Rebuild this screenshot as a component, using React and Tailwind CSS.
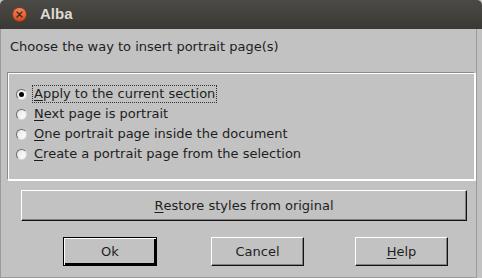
import React from "react";

const OPTIONS = [
  { key: "A", rest: "pply to the current section", checked: true },
  { key: "N", rest: "ext page is portrait" },
  { key: "O", rest: "ne portrait page inside the document" },
  { key: "C", rest: "reate a portrait page from the selection" },
];

function Radio({ checked }) {
  return (
    <div className="relative w-[11px] h-[11px] rounded-full border border-t-[#6e6e6e] border-l-[#6e6e6e] border-b-[#d8d8d8] border-r-[#d8d8d8] bg-gradient-to-br from-[#e6e6e6] to-white flex items-center justify-center shrink-0">
      {checked && <div className="w-[5px] h-[5px] rounded-full bg-black" />}
    </div>
  );
}

function Btn({ children, w, isDefault }) {
  return (
    <div
      className={`${w} h-[29px] flex items-center justify-center text-[13px] text-[#1e1e1e] ${
        isDefault
          ? "border border-black shadow-[inset_1px_1px_0_#fff,inset_-2px_-2px_0_#000]"
          : "border border-t-white border-l-white border-b-[#111] border-r-[#111] shadow-[inset_-1px_-1px_0_#808080]"
      }`}
    >
      {children}
    </div>
  );
}

export default function App() {
  return (
    <div className="w-[482px] h-[278px] bg-[#c2c2c2] flex flex-col overflow-hidden" style={{ fontFamily: '"DejaVu Sans", sans-serif' }}>
      {/* title bar */}
      <div className="h-[29px] shrink-0 rounded-t-[5px] bg-gradient-to-b from-[#4b4a45] to-[#3a3935] flex items-center pl-[12px]">
        <div className="w-[15px] h-[15px] rounded-full bg-gradient-to-b from-[#f5855a] to-[#d9471a] border border-[#8a3a1a] flex items-center justify-center">
          <svg width="7" height="7" viewBox="0 0 7 7">
            <path d="M1 1L6 6M6 1L1 6" stroke="#3a2a20" strokeWidth="1.3" strokeLinecap="round" />
          </svg>
        </div>
        <span className="ml-[13px] text-[15px] font-bold text-[#dfdbd2]" style={{ fontFamily: '"Liberation Sans", sans-serif' }}>
          Alba
        </span>
      </div>

      {/* body */}
      <div className="flex-1 flex flex-col border-l border-r border-b border-[#9a9a9a] mr-[5px]">
        <div className="pl-[9px] pt-[10px] text-[13px] leading-[16px] text-[#1e1e1e]">
          Choose the way to insert portrait page(s)
        </div>

        <div className="ml-[6px] mr-[1px] mt-[17px] h-[108px] border border-t-[#8a8a8a] border-l-[#8a8a8a] border-b-white border-r-white shadow-[1px_1px_0_#fff,inset_1px_1px_0_#fff] pt-[11px] pl-[8px] flex flex-col">
          {OPTIONS.map((o) => (
            <div key={o.key} className="h-[20px] flex items-center text-[13px] text-[#1e1e1e]">
              <Radio checked={o.checked} />
              <span
                className={`ml-[6px] leading-[16px] px-[1px] ${
                  o.checked ? "outline outline-1 outline-dotted outline-[#333]" : ""
                }`}
              >
                <span className="underline underline-offset-2">{o.key}</span>
                {o.rest}
              </span>
            </div>
          ))}
        </div>

        <div className="ml-[20px] mt-[10px] w-[446px] h-[31px] border border-t-white border-l-white border-b-[#111] border-r-[#111] shadow-[inset_-1px_-1px_0_#808080] flex items-center justify-center text-[13px] text-[#1e1e1e]">
          <span className="underline underline-offset-2">R</span>estore styles from original
        </div>

        <div className="mt-[16px] flex">
          <div className="ml-[62px]">
            <Btn w="w-[94px]" isDefault>
              Ok
            </Btn>
          </div>
          <div className="ml-[54px]">
            <Btn w="w-[93px]">Cancel</Btn>
          </div>
          <div className="ml-[51px]">
            <Btn w="w-[93px]">
              <span className="underline underline-offset-2">H</span>elp
            </Btn>
          </div>
        </div>
      </div>
    </div>
  );
}
